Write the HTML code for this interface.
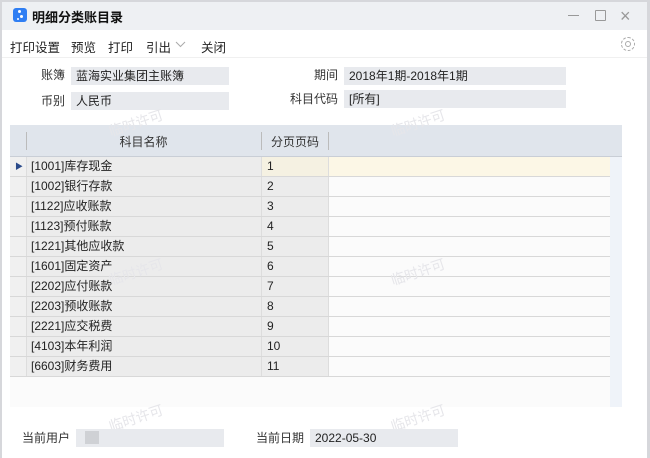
<!DOCTYPE html>
<html><head><meta charset="utf-8"><style>
*{margin:0;padding:0;box-sizing:border-box}
body{width:650px;height:458px;overflow:hidden;background:#fff;font-family:"Liberation Sans","Noto Sans CJK SC",sans-serif;font-size:12px;color:#222;position:relative}
.a{position:absolute}
.frame{left:0;top:0;width:650px;height:458px;border-left:2px solid #d6d7db;border-right:3px solid #d6d7db;border-top:2px solid #d6d7db}
.title{left:2px;top:2px;width:645px;height:28px;background:#eef0f3}
.inp{background:#e8eaee;height:18px;line-height:18px;padding-left:5px;font-size:12px}
.lbl{text-align:right;font-size:12px;color:#333;line-height:18px}
.row{left:10px;width:600px;height:20px;border-bottom:1px solid #d8d8d8;line-height:19px}
.c{position:absolute;top:0;height:19px}
.wm{color:#e6e6ea;font-size:14px;transform:rotate(-18deg)}
</style></head><body>
<div class="a title"></div>
<div class="a" style="left:13px;top:8px;width:14px;height:14px;background:#2f7ef3;border-radius:3px"></div>
<div class="a" style="left:18px;top:10px;width:3px;height:3px;background:#fff;border-radius:50%"></div>
<div class="a" style="left:20px;top:15px;width:3px;height:3px;background:#fff;border-radius:50%"></div>
<div class="a" style="left:17px;top:18px;width:2px;height:2px;background:#fff;border-radius:50%"></div>
<div class="a" style="left:32px;top:7px;font-size:13px;font-weight:bold;color:#111">明细分类账目录</div>
<div class="a" style="left:568px;top:15px;width:11px;height:1px;background:#999"></div>
<div class="a" style="left:595px;top:10px;width:11px;height:11px;border:1px solid #999;border-radius:1px"></div>
<div class="a" style="left:620px;top:2px;font-size:18px;color:#999;line-height:28px">×</div>
<div class="a" style="left:10px;top:37px;font-size:12.5px">打印设置</div>
<div class="a" style="left:71px;top:37px;font-size:12.5px">预览</div>
<div class="a" style="left:108px;top:37px;font-size:12.5px">打印</div>
<div class="a" style="left:146px;top:37px;font-size:12.5px">引出</div>
<svg class="a" style="left:175px;top:41px" width="11" height="7"><path d="M1 1L5.5 5.5L10 1" fill="none" stroke="#aaa" stroke-width="1"/></svg>
<div class="a" style="left:201px;top:37px;font-size:12.5px">关闭</div>
<div class="a" style="left:621px;top:37px;width:14px;height:14px;border:1.5px dashed #aaa;border-radius:50%"></div>
<div class="a" style="left:625px;top:41px;width:6px;height:6px;border:1.5px solid #aaa;border-radius:50%"></div>
<div class="a" style="left:2px;top:57px;width:645px;height:1px;background:#f0f0f0"></div>

<div class="a lbl" style="left:20px;top:66px;width:45px">账簿</div>
<div class="a inp" style="left:71px;top:67px;width:158px">蓝海实业集团主账簿</div>
<div class="a lbl" style="left:20px;top:92px;width:45px">币别</div>
<div class="a inp" style="left:71px;top:92px;width:158px">人民币</div>
<div class="a lbl" style="left:290px;top:66px;width:48px">期间</div>
<div class="a inp" style="left:344px;top:67px;width:222px">2018年1期-2018年1期</div>
<div class="a lbl" style="left:280px;top:90px;width:58px">科目代码</div>
<div class="a inp" style="left:344px;top:90px;width:222px">[所有]</div>

<div class="a" style="left:10px;top:125px;width:612px;height:282px;background:#fbfbfb"></div>
<div class="a" style="left:610px;top:157px;width:12px;height:250px;background:#eff3f9"></div>
<div class="a" style="left:10px;top:125px;width:612px;height:32px;background:#e0e5ec;border-bottom:1px solid #c9ced6"></div>
<div class="a" style="left:26px;top:132px;width:1px;height:18px;background:#bbb"></div>
<div class="a" style="left:261px;top:132px;width:1px;height:18px;background:#bbb"></div>
<div class="a" style="left:328px;top:132px;width:1px;height:18px;background:#bbb"></div>
<div class="a" style="left:26px;top:133px;width:235px;text-align:center;color:#333">科目名称</div>
<div class="a" style="left:262px;top:133px;width:66px;text-align:center;color:#333">分页页码</div>
<div id="rows"></div>
<script>
var d=[["1001","库存现金"],["1002","银行存款"],["1122","应收账款"],["1123","预付账款"],["1221","其他应收款"],["1601","固定资产"],["2202","应付账款"],["2203","预收账款"],["2221","应交税费"],["4103","本年利润"],["6603","财务费用"]];
var h="";d.forEach(function(r,i){var y=157+i*20,f=i==0;
h+='<div class="a row" style="top:'+y+'px"><div class="c" style="left:0;width:16px;background:#f0f0f0;color:#2a4a8a;font-size:8px;padding-left:5px">'+(f?'▶':'')+'</div><div class="c" style="left:16px;width:235px;background:#ececec;border-left:1px solid #ddd;padding-left:4px">['+r[0]+']'+r[1]+'</div><div class="c" style="left:251px;width:67px;background:'+(f?'#f5f1e2':'#ececec')+';border-left:1px solid #ddd;padding-left:5px">'+(i+1)+'</div><div class="c" style="left:318px;width:282px;background:'+(f?'#fcf7e6':'#fbfbfb')+';border-left:1px solid #ddd"></div></div>';});
document.getElementById("rows").innerHTML=h;
</script>
<div class="a wm" style="left:108px;top:113px">临时许可</div>
<div class="a wm" style="left:390px;top:113px">临时许可</div>
<div class="a wm" style="left:108px;top:262px">临时许可</div>
<div class="a wm" style="left:390px;top:262px">临时许可</div>
<div class="a wm" style="left:108px;top:408px">临时许可</div>
<div class="a wm" style="left:390px;top:408px">临时许可</div>

<div class="a lbl" style="left:20px;top:429px;width:50px">当前用户</div>
<div class="a inp" style="left:76px;top:429px;width:148px"></div>
<div class="a" style="left:85px;top:431px;width:14px;height:13px;background:#cfd1d5"></div>
<div class="a lbl" style="left:250px;top:429px;width:54px">当前日期</div>
<div class="a inp" style="left:310px;top:429px;width:148px">2022-05-30</div>
<div class="a frame"></div>
</body></html>
